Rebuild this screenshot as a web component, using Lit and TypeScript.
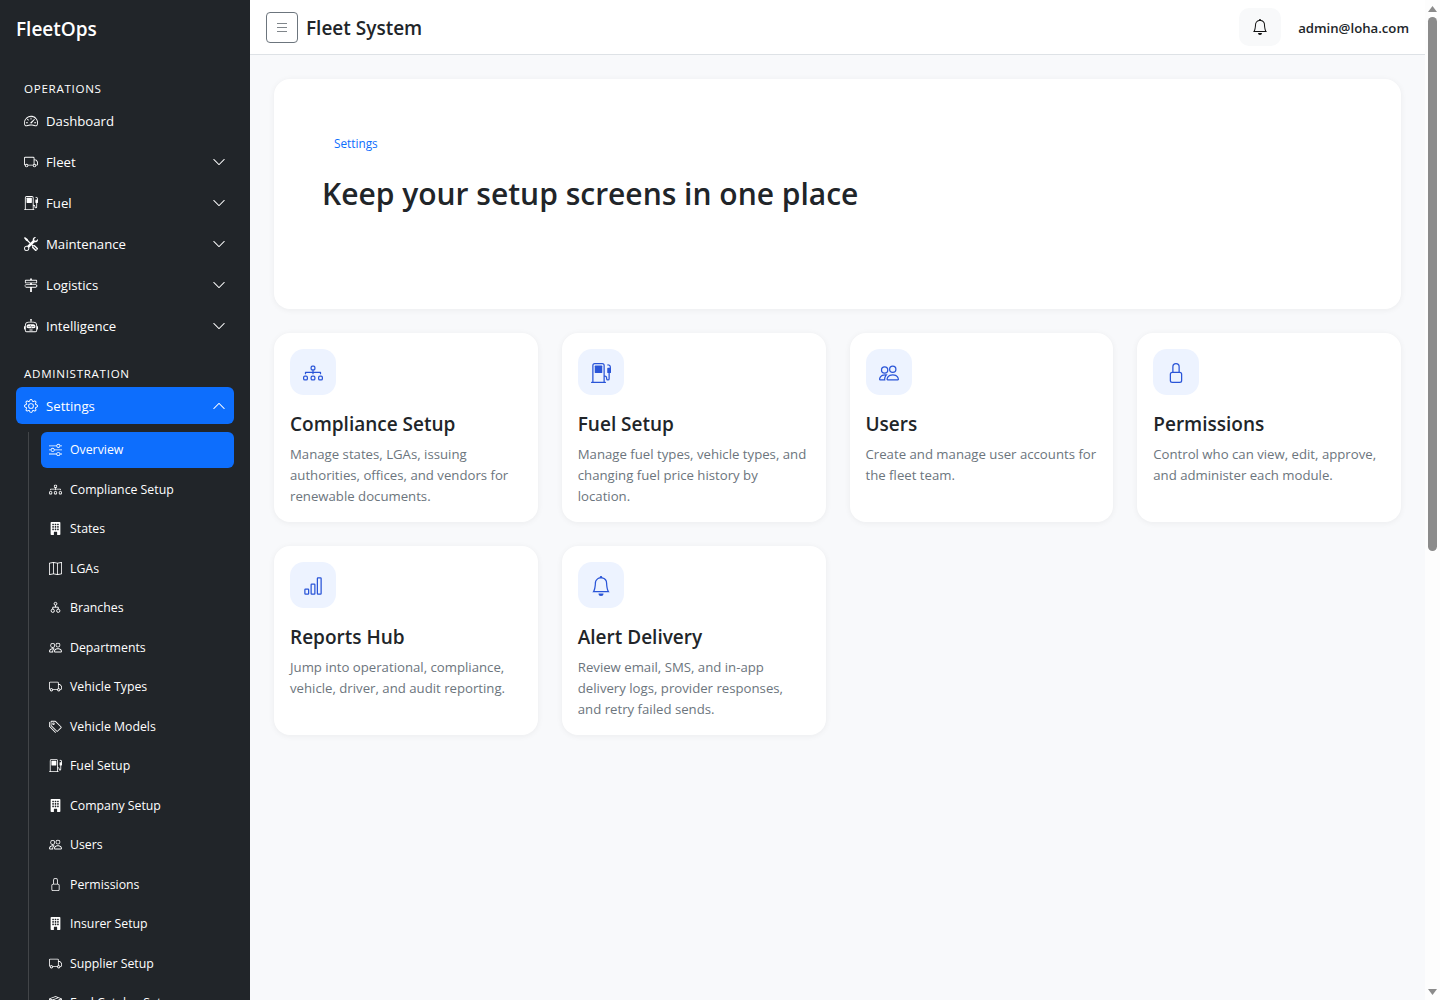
import {html, svg, css, LitElement} from 'lit';
import {customElement} from 'lit/decorators.js';
import {map} from 'lit/directives/map.js';

const ICONS: Record<string, unknown> = {
  speedometer: svg`<path d="M8 4a.5.5 0 0 1 .5.5V6a.5.5 0 0 1-1 0V4.5A.5.5 0 0 1 8 4M3.732 5.732a.5.5 0 0 1 .707 0l.915.914a.5.5 0 1 1-.708.708l-.914-.915a.5.5 0 0 1 0-.707M2 10a.5.5 0 0 1 .5-.5h1.586a.5.5 0 0 1 0 1H2.5A.5.5 0 0 1 2 10m9.5 0a.5.5 0 0 1 .5-.5h1.5a.5.5 0 0 1 0 1H12a.5.5 0 0 1-.5-.5m.754-4.246a.39.39 0 0 0-.527-.02L7.547 9.31a.91.91 0 1 0 1.302 1.258l3.434-4.297a.39.39 0 0 0-.029-.518z"/><path fill-rule="evenodd" d="M0 10a8 8 0 1 1 15.547 2.661c-.442 1.253-1.845 1.602-2.932 1.25C11.309 13.488 9.475 13 8 13c-1.474 0-3.31.488-4.615.911-1.087.352-2.49.003-2.932-1.25A8 8 0 0 1 0 10m8-7a7 7 0 0 0-6.603 9.329c.203.575.923.876 1.68.63C4.397 12.533 6.358 12 8 12s3.604.532 4.923.96c.757.245 1.477-.056 1.68-.631A7 7 0 0 0 8 3"/>`,
  truck: svg`<path d="M0 3.5A1.5 1.5 0 0 1 1.5 2h9A1.5 1.5 0 0 1 12 3.5V5h1.02a1.5 1.5 0 0 1 1.17.563l1.481 1.85a1.5 1.5 0 0 1 .329.938V10.5a1.5 1.5 0 0 1-1.5 1.5H14a2 2 0 1 1-4 0H5a2 2 0 1 1-3.998-.085A1.5 1.5 0 0 1 0 10.5zm1.294 7.456A2 2 0 0 1 4.732 11h5.536a2 2 0 0 1 .732-.732V3.5a.5.5 0 0 0-.5-.5h-9a.5.5 0 0 0-.5.5v7a.5.5 0 0 0 .294.456M12 10a2 2 0 0 1 1.732 1h.768a.5.5 0 0 0 .5-.5V8.35a.5.5 0 0 0-.11-.312l-1.48-1.85A.5.5 0 0 0 13.02 6H12zm-9 1a1 1 0 1 0 0 2 1 1 0 0 0 0-2m9 0a1 1 0 1 0 0 2 1 1 0 0 0 0-2"/>`,
  fuel: svg`<path d="M3 2.5a.5.5 0 0 1 .5-.5h5a.5.5 0 0 1 .5.5v5a.5.5 0 0 1-.5.5h-5a.5.5 0 0 1-.5-.5z"/><path d="M1 2a2 2 0 0 1 2-2h6a2 2 0 0 1 2 2v8a2 2 0 0 1 2 2v.5a.5.5 0 0 0 1 0V8h-.5a.5.5 0 0 1-.5-.5V4.375a.5.5 0 0 1 .5-.5h1.495c-.011-.476-.053-.894-.201-1.222a.97.97 0 0 0-.394-.458c-.184-.11-.464-.195-.9-.195a.5.5 0 0 1 0-1q.846-.002 1.412.336c.383.228.634.551.794.907.295.655.294 1.465.294 2.081v3.175a.5.5 0 0 1-.5.501H15v4.5a1.5 1.5 0 0 1-3 0V12a1 1 0 0 0-1-1v4h.5a.5.5 0 0 1 0 1H.5a.5.5 0 0 1 0-1H1zm9 0a1 1 0 0 0-1-1H3a1 1 0 0 0-1 1v13h8z"/>`,
  tools: svg`<path d="M1 0 0 1l2.2 3.081a1 1 0 0 0 .815.419h.07a1 1 0 0 1 .708.293l2.675 2.675-2.617 2.654A3.003 3.003 0 0 0 0 13a3 3 0 1 0 5.878-.851l2.654-2.617.968.968-.305.914a1 1 0 0 0 .242 1.023l3.27 3.27a.997.997 0 0 0 1.414 0l1.586-1.586a.997.997 0 0 0 0-1.414l-3.27-3.27a1 1 0 0 0-1.023-.242L10.5 9.5l-.96-.96 2.68-2.643A3.005 3.005 0 0 0 16 3q0-.405-.102-.777l-2.14 2.141L12 4l-.364-1.757L13.777.102a3 3 0 0 0-3.675 3.68L7.462 6.46 4.793 3.793a1 1 0 0 1-.293-.707v-.071a1 1 0 0 0-.419-.814zm9.646 10.646a.5.5 0 0 1 .708 0l2.914 2.915a.5.5 0 0 1-.707.707l-2.915-2.914a.5.5 0 0 1 0-.708M3 11l.471.242.529.026.287.445.445.287.026.529L5 13l-.242.471-.026.529-.445.287-.287.445-.529.026L3 15l-.471-.242L2 14.732l-.287-.445L1.268 14l-.026-.529L1 13l.242-.471.026-.529.445-.287.287-.445.529-.026z"/>`,
  signpost: svg`<path d="M7 1.414V2H2a1 1 0 0 0-1 1v2a1 1 0 0 0 1 1h5v1H2.5a1 1 0 0 0-.8.4L.725 8.7a.5.5 0 0 0 0 .6l.975 1.3a1 1 0 0 0 .8.4H7v5h2v-5h4.5a1 1 0 0 0 .8-.4l.975-1.3a.5.5 0 0 0 0-.6L14.3 7.4a1 1 0 0 0-.8-.4H9V6h5a1 1 0 0 0 1-1V3a1 1 0 0 0-1-1H9v-.586a1 1 0 0 0-2 0M13.5 8l.75 1-.75 1H2l-.75-1L2 8zm.5-5v2H2V3z"/>`,
  robot: svg`<path d="M6 12.5a.5.5 0 0 1 .5-.5h3a.5.5 0 0 1 0 1h-3a.5.5 0 0 1-.5-.5M3 8.062C3 6.76 4.235 5.765 5.53 5.886a26.6 26.6 0 0 0 4.94 0C11.765 5.765 13 6.76 13 8.062v1.157a.93.93 0 0 1-.765.935c-.845.147-2.34.346-4.235.346s-3.39-.2-4.235-.346A.93.93 0 0 1 3 9.219zm4.542-.827a.25.25 0 0 0-.217.068l-.92.9a25 25 0 0 1-1.871-.183.25.25 0 0 0-.068.495c.55.076 1.232.149 2.02.193a.25.25 0 0 0 .189-.071l.754-.736.847 1.71a.25.25 0 0 0 .404.062l.932-.97a25 25 0 0 0 1.922-.188.25.25 0 0 0-.068-.495c-.538.074-1.207.145-1.98.189a.25.25 0 0 0-.166.076l-.754.785-.842-1.7a.25.25 0 0 0-.182-.135"/><path d="M8.5 1.866a1 1 0 1 0-1 0V3h-2A4.5 4.5 0 0 0 1 7.5V8a1 1 0 0 0-1 1v2a1 1 0 0 0 1 1v1a2 2 0 0 0 2 2h10a2 2 0 0 0 2-2v-1a1 1 0 0 0 1-1V9a1 1 0 0 0-1-1v-.5A4.5 4.5 0 0 0 10.5 3h-2zM14 7.5V13a1 1 0 0 1-1 1H3a1 1 0 0 1-1-1V7.5A3.5 3.5 0 0 1 5.5 4h5A3.5 3.5 0 0 1 14 7.5"/>`,
  gear: svg`<path d="M8 4.754a3.246 3.246 0 1 0 0 6.492 3.246 3.246 0 0 0 0-6.492M5.754 8a2.246 2.246 0 1 1 4.492 0 2.246 2.246 0 0 1-4.492 0"/><path d="M9.796 1.343c-.527-1.79-3.065-1.79-3.592 0l-.094.319a.873.873 0 0 1-1.255.52l-.292-.16c-1.64-.892-3.433.902-2.54 2.541l.159.292a.873.873 0 0 1-.52 1.255l-.319.094c-1.79.527-1.79 3.065 0 3.592l.319.094a.873.873 0 0 1 .52 1.255l-.16.292c-.892 1.64.901 3.434 2.541 2.54l.292-.159a.873.873 0 0 1 1.255.52l.094.319c.527 1.79 3.065 1.79 3.592 0l.094-.319a.873.873 0 0 1 1.255-.52l.292.16c1.64.893 3.434-.902 2.54-2.541l-.159-.292a.873.873 0 0 1 .52-1.255l.319-.094c1.79-.527 1.79-3.065 0-3.592l-.319-.094a.873.873 0 0 1-.52-1.255l.16-.292c.893-1.64-.902-3.433-2.541-2.54l-.292.159a.873.873 0 0 1-1.255-.52zm-2.633.283c.246-.835 1.428-.835 1.674 0l.094.319a1.873 1.873 0 0 0 2.693 1.115l.291-.16c.764-.415 1.6.42 1.184 1.185l-.159.292a1.873 1.873 0 0 0 1.116 2.692l.318.094c.835.246.835 1.428 0 1.674l-.319.094a1.873 1.873 0 0 0-1.115 2.693l.16.291c.415.764-.42 1.6-1.185 1.184l-.291-.159a1.873 1.873 0 0 0-2.693 1.116l-.094.318c-.246.835-1.428.835-1.674 0l-.094-.319a1.873 1.873 0 0 0-2.692-1.115l-.292.16c-.764.415-1.6-.42-1.184-1.185l.159-.291A1.873 1.873 0 0 0 1.945 8.93l-.319-.094c-.835-.246-.835-1.428 0-1.674l.319-.094A1.873 1.873 0 0 0 3.06 4.377l-.16-.292c-.415-.764.42-1.6 1.185-1.184l.292.159a1.873 1.873 0 0 0 2.692-1.115z"/>`,
  sliders: svg`<path fill-rule="evenodd" d="M11.5 2a1.5 1.5 0 1 0 0 3 1.5 1.5 0 0 0 0-3M9.05 3a2.5 2.5 0 0 1 4.9 0H16v1h-2.05a2.5 2.5 0 0 1-4.9 0H0V3zM4.5 7a1.5 1.5 0 1 0 0 3 1.5 1.5 0 0 0 0-3M2.05 8a2.5 2.5 0 0 1 4.9 0H16v1H6.95a2.5 2.5 0 0 1-4.9 0H0V8zm9.45 4a1.5 1.5 0 1 0 0 3 1.5 1.5 0 0 0 0-3m-2.45 1a2.5 2.5 0 0 1 4.9 0H16v1h-2.05a2.5 2.5 0 0 1-4.9 0H0v-1z"/>`,
  diagram: svg`<path fill-rule="evenodd" d="M6 3.5A1.5 1.5 0 0 1 7.5 2h1A1.5 1.5 0 0 1 10 3.5v1A1.5 1.5 0 0 1 8.5 6v1H14a.5.5 0 0 1 .5.5v1a.5.5 0 0 1-1 0V8h-5v.5a.5.5 0 0 1-1 0V8h-5v.5a.5.5 0 0 1-1 0v-1A.5.5 0 0 1 2 7h5.5V6A1.5 1.5 0 0 1 6 4.5zM8.5 5a.5.5 0 0 0 .5-.5v-1a.5.5 0 0 0-.5-.5h-1a.5.5 0 0 0-.5.5v1a.5.5 0 0 0 .5.5zM0 11.5A1.5 1.5 0 0 1 1.5 10h1A1.5 1.5 0 0 1 4 11.5v1A1.5 1.5 0 0 1 2.5 14h-1A1.5 1.5 0 0 1 0 12.5zm1.5-.5a.5.5 0 0 0-.5.5v1a.5.5 0 0 0 .5.5h1a.5.5 0 0 0 .5-.5v-1a.5.5 0 0 0-.5-.5zm4.5.5A1.5 1.5 0 0 1 7.5 10h1a1.5 1.5 0 0 1 1.5 1.5v1A1.5 1.5 0 0 1 8.5 14h-1A1.5 1.5 0 0 1 6 12.5zm1.5-.5a.5.5 0 0 0-.5.5v1a.5.5 0 0 0 .5.5h1a.5.5 0 0 0 .5-.5v-1a.5.5 0 0 0-.5-.5zm4.5.5a1.5 1.5 0 0 1 1.5-1.5h1a1.5 1.5 0 0 1 1.5 1.5v1a1.5 1.5 0 0 1-1.5 1.5h-1a1.5 1.5 0 0 1-1.5-1.5zm1.5-.5a.5.5 0 0 0-.5.5v1a.5.5 0 0 0 .5.5h1a.5.5 0 0 0 .5-.5v-1a.5.5 0 0 0-.5-.5z"/>`,
  building: svg`<path fill-rule="evenodd" d="M3 0a1 1 0 0 0-1 1v14a1 1 0 0 0 1 1h3v-3.5a.5.5 0 0 1 .5-.5h3a.5.5 0 0 1 .5.5V16h3a1 1 0 0 0 1-1V1a1 1 0 0 0-1-1zM4 2.5a.5.5 0 0 1 .5-.5h1a.5.5 0 0 1 .5.5v1a.5.5 0 0 1-.5.5h-1a.5.5 0 0 1-.5-.5zm3 0a.5.5 0 0 1 .5-.5h1a.5.5 0 0 1 .5.5v1a.5.5 0 0 1-.5.5h-1a.5.5 0 0 1-.5-.5zm3.5-.5a.5.5 0 0 0-.5.5v1a.5.5 0 0 0 .5.5h1a.5.5 0 0 0 .5-.5v-1a.5.5 0 0 0-.5-.5zM4 5.5a.5.5 0 0 1 .5-.5h1a.5.5 0 0 1 .5.5v1a.5.5 0 0 1-.5.5h-1a.5.5 0 0 1-.5-.5zM7.5 5a.5.5 0 0 0-.5.5v1a.5.5 0 0 0 .5.5h1a.5.5 0 0 0 .5-.5v-1a.5.5 0 0 0-.5-.5zm2.5.5a.5.5 0 0 1 .5-.5h1a.5.5 0 0 1 .5.5v1a.5.5 0 0 1-.5.5h-1a.5.5 0 0 1-.5-.5zM4.5 8a.5.5 0 0 0-.5.5v1a.5.5 0 0 0 .5.5h1a.5.5 0 0 0 .5-.5v-1a.5.5 0 0 0-.5-.5zm2.5.5a.5.5 0 0 1 .5-.5h1a.5.5 0 0 1 .5.5v1a.5.5 0 0 1-.5.5h-1a.5.5 0 0 1-.5-.5zm3.5-.5a.5.5 0 0 0-.5.5v1a.5.5 0 0 0 .5.5h1a.5.5 0 0 0 .5-.5v-1a.5.5 0 0 0-.5-.5z"/>`,
  map: svg`<path fill-rule="evenodd" d="M15.817.113A.5.5 0 0 1 16 .5v14a.5.5 0 0 1-.402.49l-5 1a.5.5 0 0 1-.196 0L5.5 15.01l-4.902.98A.5.5 0 0 1 0 15.5v-14a.5.5 0 0 1 .402-.49l5-1a.5.5 0 0 1 .196 0L10.5.99l4.902-.98a.5.5 0 0 1 .415.103M10 1.91l-4-.8v12.98l4 .8zm1 12.98 4-.8V1.11l-4 .8zm-6-.8V1.11l-4 .8v12.98z"/>`,
  branch: svg`<g fill="none" stroke="currentColor" stroke-width="1.2"><circle cx="8" cy="3.4" r="1.7"/><circle cx="4.6" cy="12" r="2"/><circle cx="11.4" cy="12" r="2"/><path d="M4.6 10V7.6h6.8V10M8 5.2v2.4"/></g>`,
  people: svg`<path d="M15 14s1 0 1-1-1-4-5-4-5 3-5 4 1 1 1 1zm-7.978-1L7 12.996c.001-.264.167-1.03.76-1.72C8.312 10.629 9.282 10 11 10c1.717 0 2.687.63 3.24 1.276.593.69.758 1.457.76 1.72l-.008.002-.014.002zM11 7a2 2 0 1 0 0-4 2 2 0 0 0 0 4m3-2a3 3 0 1 1-6 0 3 3 0 0 1 6 0M6.936 9.28a6 6 0 0 0-1.23-.247A7 7 0 0 0 5 9c-4 0-5 3-5 4q0 1 1 1h4.216A2.24 2.24 0 0 1 5 13c0-1.01.377-2.042 1.09-2.904.243-.294.526-.569.846-.816M4.92 10A5.5 5.5 0 0 0 4 13H1c0-.26.164-1.03.76-1.724.545-.636 1.492-1.256 3.16-1.275ZM1.5 5.5a3 3 0 1 1 6 0 3 3 0 0 1-6 0m3-2a2 2 0 1 0 0 4 2 2 0 0 0 0-4"/>`,
  tags: svg`<path d="M3 2v4.586l7 7L14.586 9l-7-7zM2 2a1 1 0 0 1 1-1h4.586a1 1 0 0 1 .707.293l7 7a1 1 0 0 1 0 1.414l-4.586 4.586a1 1 0 0 1-1.414 0l-7-7A1 1 0 0 1 2 6.586z"/><path d="M5.5 5a.5.5 0 1 1 0-1 .5.5 0 0 1 0 1m0 1a1.5 1.5 0 1 0 0-3 1.5 1.5 0 0 0 0 3M1 7.086a1 1 0 0 0 .293.707L8.75 15.25l-.043.043a1 1 0 0 1-1.414 0l-7-7A1 1 0 0 1 0 7.586V3a1 1 0 0 1 1-1z"/>`,
  lock: svg`<path d="M8 1a2 2 0 0 1 2 2v4H6V3a2 2 0 0 1 2-2zm3 6V3a3 3 0 0 0-6 0v4a2 2 0 0 0-2 2v5a2 2 0 0 0 2 2h6a2 2 0 0 0 2-2V9a2 2 0 0 0-2-2zM5 8h6a1 1 0 0 1 1 1v5a1 1 0 0 1-1 1H5a1 1 0 0 1-1-1V9a1 1 0 0 1 1-1z"/>`,
  box: svg`<path d="M8.186 1.113a.5.5 0 0 0-.372 0L1.846 3.5l2.404.961L10.404 2zm3.564 1.426L5.596 5 8 5.961 14.154 3.5zm3.25 1.7-6.5 2.6v7.922l6.5-2.6V4.24zM7.5 14.762V6.838L1 4.239v7.925zM7.443.184a1.5 1.5 0 0 1 1.114 0l7.129 2.852A.5.5 0 0 1 16 3.5v8.662a1 1 0 0 1-.629.928l-7.185 2.874a.5.5 0 0 1-.372 0L.63 13.09a1 1 0 0 1-.63-.928V3.5a.5.5 0 0 1 .314-.464z"/>`,
  bars: svg`<path d="M4 11H2v3h2zm5-4H7v7h2zm5-5v12h-2V2zm-2-1a1 1 0 0 0-1 1v12a1 1 0 0 0 1 1h2a1 1 0 0 0 1-1V2a1 1 0 0 0-1-1zM6 7a1 1 0 0 1 1-1h2a1 1 0 0 1 1 1v7a1 1 0 0 1-1 1H7a1 1 0 0 1-1-1zm-5 4a1 1 0 0 1 1-1h2a1 1 0 0 1 1 1v3a1 1 0 0 1-1 1H2a1 1 0 0 1-1-1z"/>`,
  bell: svg`<path d="M8 16a2 2 0 0 0 2-2H6a2 2 0 0 0 2 2M8 1.918l-.797.161A4 4 0 0 0 4 6c0 .628-.134 2.197-.459 3.742-.16.767-.376 1.566-.663 2.258h10.244c-.287-.692-.502-1.49-.663-2.258C12.134 8.197 12 6.628 12 6a4 4 0 0 0-3.203-3.92zM14.22 12c.223.447.481.801.78 1H1c.299-.199.557-.553.78-1C2.68 10.2 3 6.88 3 6c0-2.42 1.72-4.44 4.005-4.901a1 1 0 1 1 1.99 0A5 5 0 0 1 13 6c0 .88.32 4.2 1.22 6"/>`,
  down: svg`<path fill-rule="evenodd" d="M1.646 4.646a.5.5 0 0 1 .708 0L8 10.293l5.646-5.647a.5.5 0 0 1 .708.708l-6 6a.5.5 0 0 1-.708 0l-6-6a.5.5 0 0 1 0-.708"/>`,
  up: svg`<path fill-rule="evenodd" d="M7.646 4.646a.5.5 0 0 1 .708 0l6 6a.5.5 0 0 1-.708.708L8 5.707l-5.646 5.647a.5.5 0 0 1-.708-.708z"/>`,
};

const icon = (name: string, size: number) => html`
  <svg class="bi" width="${size}" height="${size}" viewBox="0 0 16 16" fill="currentColor">${ICONS[name]}</svg>
`;

const OPERATIONS = [
  {label: 'Dashboard', icon: 'speedometer', more: false},
  {label: 'Fleet', icon: 'truck', more: true},
  {label: 'Fuel', icon: 'fuel', more: true},
  {label: 'Maintenance', icon: 'tools', more: true},
  {label: 'Logistics', icon: 'signpost', more: true},
  {label: 'Intelligence', icon: 'robot', more: true},
];

const SETTINGS_LINKS = [
  {label: 'Overview', icon: 'sliders', active: true},
  {label: 'Compliance Setup', icon: 'diagram'},
  {label: 'States', icon: 'building'},
  {label: 'LGAs', icon: 'map'},
  {label: 'Branches', icon: 'branch'},
  {label: 'Departments', icon: 'people'},
  {label: 'Vehicle Types', icon: 'truck'},
  {label: 'Vehicle Models', icon: 'tags'},
  {label: 'Fuel Setup', icon: 'fuel'},
  {label: 'Company Setup', icon: 'building'},
  {label: 'Users', icon: 'people'},
  {label: 'Permissions', icon: 'lock'},
  {label: 'Insurer Setup', icon: 'building'},
  {label: 'Supplier Setup', icon: 'truck'},
  {label: 'Fuel Catalog Setup', icon: 'box'},
];

const CARDS = [
  {title: 'Compliance Setup', icon: 'diagram', text: 'Manage states, LGAs, issuing authorities, offices, and vendors for renewable documents.'},
  {title: 'Fuel Setup', icon: 'fuel', text: 'Manage fuel types, vehicle types, and changing fuel price history by location.'},
  {title: 'Users', icon: 'people', text: 'Create and manage user accounts for the fleet team.'},
  {title: 'Permissions', icon: 'lock', text: 'Control who can view, edit, approve, and administer each module.'},
  {title: 'Reports Hub', icon: 'bars', text: 'Jump into operational, compliance, vehicle, driver, and audit reporting.'},
  {title: 'Alert Delivery', icon: 'bell', text: 'Review email, SMS, and in-app delivery logs, provider responses, and retry failed sends.'},
];

@customElement('app-root')
export class AppRoot extends LitElement {
  static styles = css`
  :host {
    display: flex;
    height: 1000px;
    overflow: hidden;
    font-family: "Open Sans", "Noto Sans", "Liberation Sans", sans-serif;
    font-size: 13.2px;
    color: #212529;
    background: #f8f9fb;
  }

  .bi {
    display: block;
    flex: none;
  }

  .sidebar {
    width: 250px;
    flex: none;
    box-sizing: border-box;
    height: 1000px;
    overflow: hidden;
    background: #212529;
    color: #fff;
    padding: 14px 16px 0;
  }

  .logo {
    font-size: 19px;
    font-weight: 600;
    line-height: 30px;
    margin-bottom: 36px;
  }

  .section {
    font-size: 11.6px;
    line-height: 18px;
    letter-spacing: 0.7px;
    padding-left: 8px;
    margin-bottom: 4.5px;
    text-transform: uppercase;
  }

  .menu {
    display: flex;
    flex-direction: column;
    gap: 4px;
    margin-bottom: 20px;
  }

  .item {
    display: flex;
    align-items: center;
    height: 37px;
    padding: 0 8px;
    border-radius: 6px;
    gap: 8px;
  }

  .item.open {
    background: #0d6efd;
  }

  .item span {
    flex: 1;
  }

  .sub {
    display: flex;
    flex-direction: column;
    gap: 4px;
    margin: 8px 0 0 12px;
    padding-left: 12px;
    border-left: 1px solid rgba(255, 255, 255, 0.15);
  }

  .sub a {
    display: flex;
    align-items: center;
    height: 35.5px;
    padding-left: 8px;
    gap: 8px;
    border-radius: 6px;
    font-size: 12.3px;
  }

  .sub a.active {
    background: #0d6efd;
  }

  .main {
    flex: 1;
    min-width: 0;
  }

  .topbar {
    display: flex;
    align-items: center;
    box-sizing: border-box;
    height: 55px;
    padding: 0 16px;
    background: #fff;
    border-bottom: 1px solid #dee2e6;
  }

  .toggler {
    display: flex;
    flex-direction: column;
    justify-content: center;
    align-items: center;
    gap: 3px;
    box-sizing: border-box;
    width: 32px;
    height: 31px;
    border: 1px solid #6c757d;
    border-radius: 4px;
    background: #fff;
    padding: 0;
  }

  .toggler i {
    display: block;
    width: 10px;
    height: 1px;
    background: #80868b;
  }

  .brand {
    flex: 1;
    margin-left: 8px;
    padding-top: 1px;
    font-size: 19px;
    font-weight: 600;
  }

  .bell {
    display: flex;
    align-items: center;
    justify-content: center;
    width: 42px;
    height: 38px;
    border-radius: 10px;
    background: #f8f9fa;
    color: #111;
    margin-right: 17px;
  }

  .user {
    padding-top: 1px;
    font-weight: 600;
  }

  .content {
    padding: 24px;
    display: flex;
    flex-direction: column;
    gap: 24px;
  }

  .hero, .card {
    background: #fff;
    border-radius: 16px;
    box-shadow: 0 1px 6px rgba(33, 37, 41, 0.06);
  }

  .hero {
    box-sizing: border-box;
    height: 230px;
    padding: 52px 48px 0;
  }

  .tag {
    color: #0d6efd;
    font-size: 11.8px;
    font-weight: 500;
    line-height: 24px;
    padding-left: 12px;
  }

  .hero h1 {
    margin: 20px 0 0;
    font-size: 30px;
    line-height: 38px;
    font-weight: 600;
  }

  .cards {
    display: grid;
    grid-template-columns: repeat(4, 1fr);
    gap: 24px;
  }

  .card {
    box-sizing: border-box;
    height: 189px;
    padding: 16px;
  }

  .card .badge {
    display: flex;
    align-items: center;
    justify-content: center;
    box-sizing: border-box;
    width: 46px;
    height: 46px;
    padding-top: 2px;
    border-radius: 14px;
    background: #edf3ff;
    color: #2a55d8;
    margin-bottom: 16px;
  }

  .card h2 {
    margin: 0 0 7px;
    font-size: 19px;
    line-height: 26px;
    font-weight: 600;
  }

  .card p {
    margin: 0;
    font-size: 13.2px;
    line-height: 21px;
    color: #6c757d;
  }

  .scrollbar {
    width: 15px;
    flex: none;
    display: flex;
    flex-direction: column;
    align-items: center;
    background: #fdfdfd;
  }

  .arrow {
    width: 15px;
    height: 17px;
    display: flex;
    align-items: center;
    justify-content: center;
  }

  .arrow svg {
    display: block;
  }

  .thumb {
    width: 9px;
    height: 534px;
    flex: none;
    border-radius: 5px;
    background: #8b8b8b;
  }

  .track {
    flex: 1;
  }
  `;

  render() {
    return html`
    <aside class="sidebar">
      <div class="logo">FleetOps</div>
      <div class="section">Operations</div>
      <nav class="menu">
        ${map(OPERATIONS, (item) => html`
        <div class="item">
          ${icon(item.icon, 14)}
          <span>${item.label}</span>
          ${item.more ? icon('down', 14) : ''}
        </div>
        `)}
      </nav>
      <div class="section">Administration</div>
      <div class="item open">
        ${icon('gear', 14)}
        <span>Settings</span>
        ${icon('up', 14)}
      </div>
      <nav class="sub">
        ${map(SETTINGS_LINKS, (link) => html`
        <a class="${link.active ? 'active' : ''}">${icon(link.icon, 13)}${link.label}</a>
        `)}
      </nav>
    </aside>
    <div class="main">
      <header class="topbar">
        <button class="toggler"><i></i><i></i><i></i></button>
        <div class="brand">Fleet System</div>
        <div class="bell">${icon('bell', 16)}</div>
        <div class="user">admin@loha.com</div>
      </header>
      <div class="content">
        <section class="hero">
          <div class="tag">Settings</div>
          <h1>Keep your setup screens in one place</h1>
        </section>
        <section class="cards">
          ${map(CARDS, (card) => html`
          <article class="card">
            <div class="badge">${icon(card.icon, 20)}</div>
            <h2>${card.title}</h2>
            <p>${card.text}</p>
          </article>
          `)}
        </section>
      </div>
    </div>
    <div class="scrollbar">
      <div class="arrow"><svg width="9" height="6" viewBox="0 0 9 6"><path d="M4.5 0 9 6H0z" fill="#8b8b8b"/></svg></div>
      <div class="thumb"></div>
      <div class="track"></div>
      <div class="arrow"><svg width="9" height="6" viewBox="0 0 9 6"><path d="M0 0h9L4.5 6z" fill="#8b8b8b"/></svg></div>
    </div>
    `;
  }
}
